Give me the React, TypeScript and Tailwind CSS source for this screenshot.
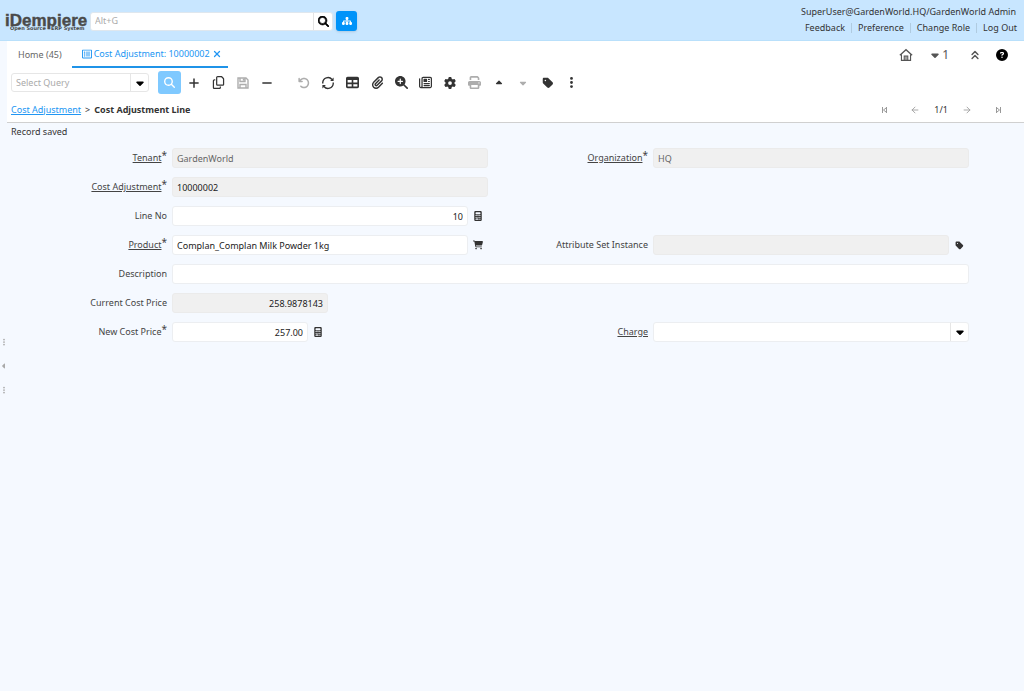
import { useState, type ReactNode } from 'react';
import { FaRegListAlt } from 'react-icons/fa';
import {
    FaArrowRotateLeft,
    FaCalculator,
    FaCaretDown,
    FaCaretUp,
    FaCartShopping,
    FaCircleQuestion,
    FaEllipsisVertical,
    FaGear,
    FaMagnifyingGlass,
    FaMagnifyingGlassPlus,
    FaMinus,
    FaPaperclip,
    FaPlus,
    FaPrint,
    FaRegCopy,
    FaRegNewspaper,
    FaSitemap,
    FaTable,
    FaTag,
} from 'react-icons/fa6';
import { ArrowLeft, ArrowRight, ChevronsUp, X } from 'lucide-react';

const readOnlyBox = 'bg-[#f0f0f0] border-[#ebebeb]';
const editableBox = 'bg-white border-[#eceef1]';

function RefreshIcon() {
    return (
        <svg viewBox="0 0 16 16" className="size-3.5" fill="none" stroke="currentColor" strokeWidth="1.6">
            <path d="M2 8.5V7.5A6 6 0 0 1 12.6 4M14 7.5V8.5A6 6 0 0 1 3.4 12" />
            <path d="M14.4 1.8V5.8H10.4ZM1.6 14.2V10.2H5.6Z" fill="currentColor" stroke="none" />
        </svg>
    );
}

function SaveIcon() {
    return (
        <svg viewBox="0 0 12 12" className="size-3" fill="none" stroke="currentColor" strokeWidth="1.4">
            <path d="M1 1H9L11 3V11H1Z" />
            <path d="M3 1V4.5H8V1M6.5 1.5V3.5M3 11V7.5H9V11" />
        </svg>
    );
}

function HomeIcon() {
    return (
        <svg viewBox="0 0 16 16" className="size-3.5" fill="none" stroke="currentColor" strokeWidth="1.3">
            <path d="M1 8.2L8 2L15 8.2" strokeWidth="1.5" />
            <path d="M2.8 7V14.2H13.2V7" />
            <path d="M6 14V9.2H10V14M8 9.5V14" />
        </svg>
    );
}

// Bar with a small triangle, mirrored for the last record
function EdgeIcon({ last }: { last?: boolean }) {
    return (
        <svg viewBox="0 0 8 8" className="size-2" fill="none" stroke="currentColor">
            {last ? (
                <path d="M6.5 1V7M2.5 1V7M3 2L5.5 4L3 6" />
            ) : (
                <path d="M2.5 1V7M6.5 1V7M6 2L3.5 4L6 6" />
            )}
        </svg>
    );
}

interface Tool {
    title: string;
    icon: ReactNode;
    disabled?: boolean;
}

const tools: Tool[] = [
    { title: 'New Record', icon: <FaPlus className="size-3" /> },
    { title: 'Copy Record', icon: <FaRegCopy /> },
    { title: 'Save', icon: <SaveIcon />, disabled: true },
    { title: 'Delete', icon: <FaMinus className="size-3" /> },
];

const moreTools: Tool[] = [
    { title: 'Undo', icon: <FaArrowRotateLeft className="size-3" />, disabled: true },
    { title: 'Refresh', icon: <RefreshIcon /> },
    { title: 'Grid Toggle', icon: <FaTable /> },
    { title: 'Attachment', icon: <FaPaperclip /> },
    { title: 'Zoom Across', icon: <FaMagnifyingGlassPlus /> },
    { title: 'Report', icon: <FaRegNewspaper /> },
    { title: 'Process', icon: <FaGear className="size-3" /> },
    { title: 'Print', icon: <FaPrint />, disabled: true },
    { title: 'Parent Record', icon: <FaCaretUp className="size-2.5" /> },
    { title: 'Detail Record', icon: <FaCaretDown className="size-2.5" />, disabled: true },
    { title: 'Label', icon: <FaTag className="size-3" /> },
    { title: 'More', icon: <FaEllipsisVertical /> },
];

function ToolButton({ title, icon, disabled }: Tool) {
    return (
        <button
            aria-label={title}
            disabled={disabled}
            className={`flex h-6 w-6 items-center justify-center text-[13px] ${
                disabled ? 'text-[#adadad]' : 'text-[#333]'
            }`}
        >
            {icon}
        </button>
    );
}

interface FieldProps {
    id: string;
    label: string;
    value?: string;
    link?: boolean;
    required?: boolean;
    readOnly?: boolean;
    muted?: boolean;
    number?: boolean;
    half?: boolean;
    wide?: boolean;
    action?: { title: string; icon: ReactNode };
}

function FieldLabel({ id, label, link, required }: Pick<FieldProps, 'id' | 'label' | 'link' | 'required'>) {
    return (
        <label htmlFor={id} className="flex h-5 items-center justify-end pr-[5px] text-[#444]">
            <span className={link ? 'underline' : ''}>{label}</span>
            {required && <span className="self-start text-[10px] leading-[14px]">*</span>}
        </label>
    );
}

function Field({ id, label, value = '', link, required, readOnly, muted, number, half, wide, action }: FieldProps) {
    const [text, setText] = useState(value);

    return (
        <>
            <FieldLabel id={id} label={label} link={link} required={required} />
            <div className={`flex h-5 ${wide ? 'col-span-3' : ''}`}>
                <div className={`flex min-w-0 ${half ? 'w-[156px]' : 'w-full'}`}>
                    <input
                        id={id}
                        type="text"
                        value={text}
                        readOnly={readOnly}
                        onChange={(e) => setText(e.target.value)}
                        className={`h-5 w-full min-w-0 flex-1 rounded-[3px] border px-1 outline-none ${
                            readOnly ? readOnlyBox : editableBox
                        } ${muted ? 'text-[#666]' : 'text-[#222]'} ${number ? 'text-right' : ''}`}
                    />
                    {action && (
                        <button
                            type="button"
                            aria-label={action.title}
                            className="flex h-5 w-5 shrink-0 items-center justify-center text-[10px] text-[#333]"
                        >
                            {action.icon}
                        </button>
                    )}
                </div>
            </div>
        </>
    );
}

function Header() {
    return (
        <header className="flex h-[41px] items-center justify-between border-b border-[#b9e0fb] bg-[#c8e6ff] pt-[2px] pr-[7px] pl-1">
            <div className="flex items-center">
                <svg viewBox="0 0 86 28" className="h-7 w-[86px]" role="img" aria-label="iDempiere">
                    <text x="1" y="19" fontFamily="Liberation Sans" fontWeight="700" fontSize="17" fill="#4a4a4a" stroke="#4a4a4a" strokeWidth="0.4">
                        iDempiere
                    </text>
                    <text x="6" y="23" fontFamily="DejaVu Sans" fontWeight="700" fontSize="5" fill="#4a4a4a">
                        Open Source
                    </text>
                    <text x="47" y="23" fontFamily="DejaVu Sans" fontWeight="700" fontSize="5" fill="#4a4a4a">
                        ERP System
                    </text>
                </svg>
                <div className="flex h-[19px] w-[243px] rounded-[3px] border border-[#dfe7ee] bg-white">
                    <input
                        type="text"
                        aria-label="Global search"
                        placeholder="Alt+G"
                        className="min-w-0 flex-1 px-1 outline-none placeholder:text-[#aaa]"
                    />
                    <button
                        aria-label="Search"
                        className="flex w-[19px] items-center justify-center border-l border-[#e3e3e3] text-[11px] text-black"
                    >
                        <FaMagnifyingGlass strokeWidth="30" />
                    </button>
                </div>
                <button
                    aria-label="Menu"
                    className="ml-[3px] flex h-5 w-[21px] items-center justify-center rounded-[3px] bg-[#0093f9] text-[10px] text-white shadow-sm"
                >
                    <FaSitemap />
                </button>
            </div>
            <div className="flex flex-col items-end self-start pt-[2px] text-[#333]">
                <span className="pr-px leading-4">SuperUser@GardenWorld.HQ/GardenWorld Admin</span>
                <nav className="flex items-center leading-[15px]">
                    <a href="#feedback" className="pr-1.5">Feedback</a>
                    <span className="h-2.5 w-px bg-[#b0cbe0]" />
                    <a href="#preference" className="px-1.5">Preference</a>
                    <span className="h-2.5 w-px bg-[#b0cbe0]" />
                    <a href="#role" className="px-1.5">Change Role</a>
                    <span className="h-2.5 w-px bg-[#b0cbe0]" />
                    <a href="#logout" className="pl-1.5">Log Out</a>
                </nav>
            </div>
        </header>
    );
}

function Tabs() {
    return (
        <div className="flex h-[27px] items-center justify-between pr-4 text-[#555]">
            <div className="flex h-full">
                <button className="pr-2.5 pl-[11px] text-[#666]">Home (45)</button>
                <div className="flex items-center gap-[2px] border-b-2 border-[#1f93e8] pr-1.5 pl-2.5 text-[#2196f3]">
                    <FaRegListAlt className="size-2.5 shrink-0" />
                    <button>Cost Adjustment: 10000002</button>
                    <button aria-label="Close tab">
                        <X className="size-2.5" strokeWidth={3} />
                    </button>
                </div>
            </div>
            <div className="flex items-center">
                <button aria-label="Home"><HomeIcon /></button>
                <button className="ml-4 flex items-center gap-px text-xs">
                    <FaCaretDown className="size-3" />1
                </button>
                <button aria-label="Collapse header" className="ml-[19px]">
                    <ChevronsUp className="size-3.5" strokeWidth={2.5} />
                </button>
                <button aria-label="Help" className="ml-3.5 text-xs text-black">
                    <FaCircleQuestion />
                </button>
            </div>
        </div>
    );
}

function Toolbar() {
    return (
        <div className="flex h-[29px] items-center pl-1">
            <div className="flex h-[19px] w-[138px] rounded-[3px] border border-[#e6e6e6] bg-white">
                <input
                    type="text"
                    aria-label="Select Query"
                    placeholder="Select Query"
                    className="min-w-0 flex-1 px-1 outline-none placeholder:text-[#aaa]"
                />
                <button
                    aria-label="Open queries"
                    className="flex w-[18px] items-center justify-center border-l border-[#e6e6e6] text-xs text-black"
                >
                    <FaCaretDown />
                </button>
            </div>
            <button
                aria-label="Lookup Record"
                className="ml-[9px] flex h-[23px] w-[23px] items-center justify-center rounded-[3px] bg-[#7fc9ff] text-[11px] text-white"
            >
                <FaMagnifyingGlass />
            </button>
            <div className="ml-px flex w-[97px] justify-between">
                {tools.map((t) => (
                    <ToolButton key={t.title} {...t} />
                ))}
            </div>
            <div className="ml-[13px] flex w-[292px] justify-between">
                {moreTools.map((t) => (
                    <ToolButton key={t.title} {...t} />
                ))}
            </div>
        </div>
    );
}

function Breadcrumb() {
    return (
        <div className="flex h-[25px] items-center justify-between pr-[22px] pl-1">
            <div className="flex gap-1 text-[#333]">
                <a href="#parent" className="text-[#2196f3] underline">Cost Adjustment</a>
                <span>&gt;</span>
                <span className="font-bold">Cost Adjustment Line</span>
            </div>
            <div className="flex items-center text-[#999]">
                <button aria-label="First record"><EdgeIcon /></button>
                <button aria-label="Previous record" className="ml-[22px]"><ArrowLeft className="size-2.5" /></button>
                <span className="mx-3.5 text-[#333]">1/1</span>
                <button aria-label="Next record"><ArrowRight className="size-2.5" /></button>
                <button aria-label="Last record" className="ml-[22px]"><EdgeIcon last /></button>
            </div>
        </div>
    );
}

function Splitter() {
    return (
        <div className="flex w-[7px] shrink-0 flex-col items-center justify-center gap-4 text-[8px] text-[#aaa]">
            <FaEllipsisVertical />
            <FaCaretDown className="rotate-90" />
            <FaEllipsisVertical />
        </div>
    );
}

export default function App() {
    const calculator = { title: 'Calculator', icon: <FaCalculator /> };

    return (
        <div className="flex min-h-screen flex-col bg-[#f5f9ff] font-['Noto_Sans',sans-serif] text-[9px] leading-4">
            <Header />
            <div className="flex flex-1">
                <Splitter />
                <main className="min-w-0 flex-1">
                    <div className="border-b border-[#d0d0d0] bg-white">
                        <Tabs />
                        <Toolbar />
                        <Breadcrumb />
                    </div>
                    <p className="pt-px pl-1 text-[#333]">Record saved</p>
                    <form className="mt-2 grid grid-cols-[165px_1fr_165px_1fr] gap-y-[9px] pr-[55px]">
                        <Field id="tenant" label="Tenant" value="GardenWorld" link required readOnly muted />
                        <Field id="org" label="Organization" value="HQ" link required readOnly muted />

                        <Field id="adjustment" label="Cost Adjustment" value="10000002" link required readOnly />
                        <div className="col-span-2" />

                        <Field id="line" label="Line No" value="10" number action={calculator} />
                        <div className="col-span-2" />

                        <Field
                            id="product"
                            label="Product"
                            value="Complan_Complan Milk Powder 1kg"
                            link
                            required
                            action={{ title: 'Find product', icon: <FaCartShopping /> }}
                        />
                        <Field
                            id="asi"
                            label="Attribute Set Instance"
                            readOnly
                            action={{ title: 'Attributes', icon: <FaTag className="size-[9px]" /> }}
                        />

                        <Field id="description" label="Description" wide />

                        <Field id="current" label="Current Cost Price" value="258.9878143" number readOnly half />
                        <div className="col-span-2" />

                        <Field id="new" label="New Cost Price" value="257.00" number required half action={calculator} />
                        <FieldLabel id="charge" label="Charge" link />
                        <div className={`flex h-5 rounded-[3px] border ${editableBox}`}>
                            <input id="charge" type="text" className="min-w-0 flex-1 px-1 outline-none" />
                            <button
                                type="button"
                                aria-label="Open charges"
                                className="flex w-[18px] items-center justify-center border-l border-[#e6e6e6] text-xs text-black"
                            >
                                <FaCaretDown />
                            </button>
                        </div>
                    </form>
                </main>
            </div>
        </div>
    );
}
